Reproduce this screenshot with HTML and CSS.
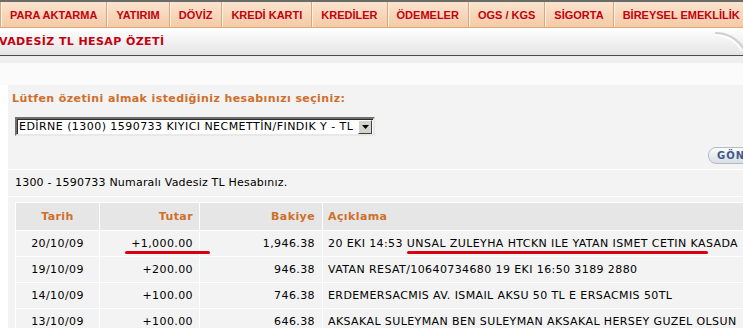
FILE: index.html
```html
<!DOCTYPE html>
<html lang="tr">
<head>
    <meta charset="UTF-8">
    <title>Vadesiz TL Hesap Özeti</title>
    <link rel="stylesheet" href="styles.css">
</head>
<body>
    <div class="nav">
        <span class="tab first"></span>
        <span class="tab">PARA AKTARMA</span>
        <span class="tab">YATIRIM</span>
        <span class="tab">DÖVİZ</span>
        <span class="tab">KREDİ KARTI</span>
        <span class="tab">KREDİLER</span>
        <span class="tab">ÖDEMELER</span>
        <span class="tab">OGS / KGS</span>
        <span class="tab">SİGORTA</span>
        <span class="tab">BİREYSEL EMEKLİLİK</span>
    </div>
    <div class="titlebar">
        <span class="title">VADESİZ TL HESAP ÖZETİ</span>
        <svg class="curl" width="40" height="26" viewBox="0 0 40 26"><path d="M4 4 Q24 4 34 22" fill="none" stroke="#cfcfcf" stroke-width="2"/><path d="M4 6 Q22 7 31 22" fill="none" stroke="#fff" stroke-width="1.5"/></svg>
    </div>
    <div class="strip"></div>
    <div class="gap"></div>

    <div class="panel">
        <div class="prompt">Lütfen özetini almak istediğiniz hesabınızı seçiniz:</div>
        <div class="select-row">
            <div class="combo">
                <span class="combo-text">EDİRNE (1300) 1590733 KIYICI NECMETTİN/FINDIK Y - TL</span>
                <span class="combo-btn"><svg width="7" height="4" viewBox="0 0 7 4"><path d="M0 0h7L3.5 4z" fill="#000"/></svg></span>
            </div>
        </div>
        <div class="actions">
            <span class="send">GÖNDER</span>
        </div>
        <div class="account">1300 - 1590733 Numaralı Vadesiz TL Hesabınız.</div>

        <table class="moves">
            <tr>
                <th class="c-date">Tarih</th>
                <th class="c-amt">Tutar</th>
                <th class="c-bal">Bakiye</th>
                <th class="c-desc">Açıklama</th>
            </tr>
            <tr>
                <td class="c-date">20/10/09</td>
                <td class="c-amt"><span class="mark m1">+1,000.00</span></td>
                <td class="c-bal">1,946.38</td>
                <td class="c-desc">20 EKI 14:53 <span class="mark m2">UNSAL ZULEYHA HTCKN ILE YATAN ISMET CETIN KA</span>SADA</td>
            </tr>
            <tr>
                <td class="c-date">19/10/09</td>
                <td class="c-amt">+200.00</td>
                <td class="c-bal">946.38</td>
                <td class="c-desc">VATAN RESAT/10640734680 19 EKI 16:50 3189 2880</td>
            </tr>
            <tr>
                <td class="c-date">14/10/09</td>
                <td class="c-amt">+100.00</td>
                <td class="c-bal">746.38</td>
                <td class="c-desc">ERDEMERSACMIS AV. ISMAIL AKSU 50 TL E ERSACMIS 50TL</td>
            </tr>
            <tr>
                <td class="c-date">13/10/09</td>
                <td class="c-amt">+100.00</td>
                <td class="c-bal">646.38</td>
                <td class="c-desc">AKSAKAL SULEYMAN BEN SULEYMAN AKSAKAL HERSEY GUZEL OLSUN</td>
            </tr>
        </table>
    </div>
</body>
</html>
```

FILE: styles.css
```css
html, body {
    margin: 0;
    padding: 0;
}
body {
    width: 743px;
    height: 328px;
    overflow: hidden;
    background: #fff;
    font-family: "DejaVu Sans", Verdana, sans-serif;
    font-size: 11px;
    letter-spacing: 0.4px;
    color: #000;
}

/* top menu */
.nav {
    display: flex;
    height: 25px;
    border-top: 2px solid #6a6a6a;
    border-bottom: 1px solid #e2a878;
    background: linear-gradient(#fbe4cf, #f3caa6);
    white-space: nowrap;
    letter-spacing: 0;
}
.tab {
    display: flex;
    align-items: center;
    padding: 0 9px;
    border-left: 1px solid #d9a77d;
    box-shadow: inset 1px 0 0 #fff3e6;
    color: #c40010;
    font-family: "Liberation Sans", Arial, sans-serif;
    font-weight: bold;
    font-size: 11px;
}
.tab.first {
    width: 5px;
    padding: 0;
    border-left: none;
    box-shadow: none;
}

/* page title */
.titlebar {
    position: relative;
    height: 27px;
    display: flex;
    align-items: center;
    background: linear-gradient(#ffffff, #e4e4e4);
    border-bottom: 1px solid #4a4a4a;
}
.title {
    margin-left: -1px;
    color: #c40010;
    font-weight: bold;
    font-size: 11px;
    letter-spacing: 0.4px;
}
.curl {
    position: absolute;
    right: -8px;
    top: 1px;
}
.strip { height: 7px; background: #eeeeee; }
.gap { height: 22px; background: #fbfbfb; }

/* form panel */
.panel {
    margin-left: 8px;
    width: 1000px;
    background: #f3f3f3;
}
.prompt {
    padding: 7px 0 0 4px;
    height: 17px;
    color: #cf6f2c;
    font-weight: bold;
    font-size: 11px;
}
.select-row {
    padding: 8px 0 6px 7px;
}
.combo {
    display: flex;
    align-items: center;
    width: 356px;
    height: 15px;
    background: #fff;
    border: 2px solid;
    border-color: #6f6f6f #e8e8e8 #e8e8e8 #6f6f6f;
    box-shadow: inset 1px 1px 0 #2c2c2c;
}
.combo-text {
    flex: 1;
    padding-left: 2px;
    font-size: 11px;
    letter-spacing: 0.45px;
    white-space: nowrap;
    overflow: hidden;
}
.combo-btn {
    display: flex;
    align-items: center;
    justify-content: center;
    width: 12px;
    height: 12px;
    margin-right: 1px;
    background: #d6d3ce;
    border: 1px solid;
    border-color: #fff #404040 #404040 #fff;
}
.actions {
    display: flex;
    align-items: center;
    height: 27px;
    padding-left: 700px;
    border-bottom: 1px solid #fff;
}
.send {
    padding: 2px 8px;
    border: 1px solid #b4bcc6;
    border-radius: 8px;
    background: linear-gradient(#fbfbfb, #d8dee6);
    color: #3b5a86;
    font-weight: bold;
    font-size: 10px;
    letter-spacing: 1px;
}
.account {
    height: 26px;
    line-height: 26px;
    padding-left: 7px;
    letter-spacing: 0.2px;
    border-bottom: 1px solid #fff;
}

/* account movements */
.moves {
    margin: 5px 0 0 7px;
    border-collapse: collapse;
    border-top: 1px solid #fff;
    white-space: nowrap;
}
.moves th, .moves td {
    height: 25px;
    padding: 0;
    border: 1px solid #fff;
    border-top: none;
}
.moves th {
    height: 27px;
    background: #e6e6e6;
    color: #cf6f2c;
    font-weight: bold;
}
.moves td { background: #f3f3f3; }
.moves .c-date { width: 83px; text-align: center; }
.moves .c-amt { width: 93px; padding-right: 6px; text-align: right; }
.moves .c-bal { width: 115px; padding-right: 7px; text-align: right; }
.moves .c-desc { width: 500px; padding-left: 5px; text-align: left; }

.mark { position: relative; }
.mark::after {
    content: "";
    position: absolute;
    height: 3px;
    border-radius: 2px;
    background: #d80010;
}
.m1::after { left: -6px; right: -17px; bottom: -4px; }
.m2::after { left: 0; right: -2px; bottom: -4px; }
```
